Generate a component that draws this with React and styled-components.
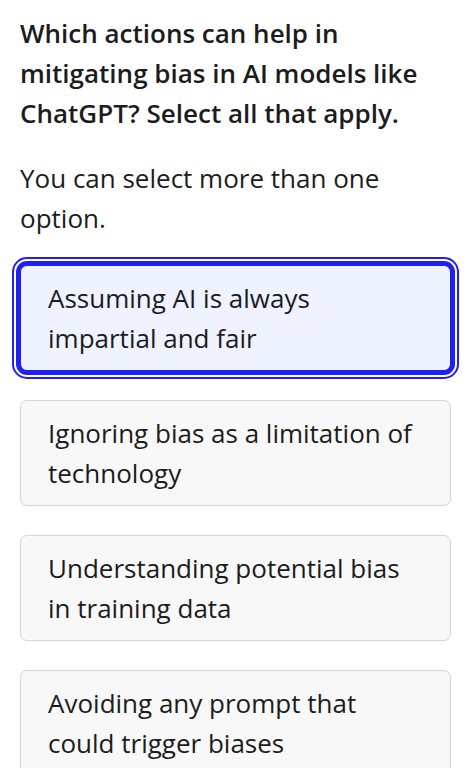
import React from 'react';
import styled, { createGlobalStyle } from 'styled-components';

const GlobalStyle = createGlobalStyle`
  body {
    margin: 0;
    background: #ffffff;
    font-family: "Open Sans", "Noto Sans", sans-serif;
    color: #1c1c1c;
  }
`;

const StyledPage = styled.main`
  padding: 13px 18px 0 20px;
`;
const StyledQuestion = styled.h1`
  margin: 0;
  font-size: 26px;
  font-weight: 600;
  line-height: 40px;
`;
const StyledHint = styled.p`
  margin: 25px 0 0;
  font-size: 26px;
  font-weight: 400;
  line-height: 40px;
`;
const StyledList = styled.div`
  display: flex;
  flex-direction: column;
  gap: 29px;
  margin-top: 27px;
`;
const StyledOption = styled.button`
  display: block;
  width: 100%;
  box-sizing: border-box;
  min-height: 106px;
  padding: 12px 30px 12px 27px;
  text-align: left;
  font-family: inherit;
  font-size: 26px;
  line-height: 40px;
  color: #1c1c1c;
  border-radius: 7px;
  border: 1px solid ${(p) => (p.$selected ? '#2020f2' : '#d5d5d5')};
  background: ${(p) => (p.$selected ? '#eef3ff' : '#f8f8f8')};
  box-shadow: ${(p) =>
    p.$selected ? '0 0 0 4px #2020f2, 0 0 0 6px #ffffff, 0 0 0 8px #2020f2' : 'none'};
  cursor: pointer;
`;

const options = [
  'Assuming AI is always impartial and fair',
  'Ignoring bias as a limitation of technology',
  'Understanding potential bias in training data',
  'Avoiding any prompt that could trigger biases',
];

export default function App() {
  return (
    <>
      <GlobalStyle />
      <StyledPage>
        <StyledQuestion>
          Which actions can help in mitigating bias in AI models like ChatGPT? Select all that
          apply.
        </StyledQuestion>
        <StyledHint>You can select more than one option.</StyledHint>
        <StyledList>
          {options.map((text, i) => (
            <StyledOption key={text} $selected={i === 0}>
              {text}
            </StyledOption>
          ))}
        </StyledList>
      </StyledPage>
    </>
  );
}
